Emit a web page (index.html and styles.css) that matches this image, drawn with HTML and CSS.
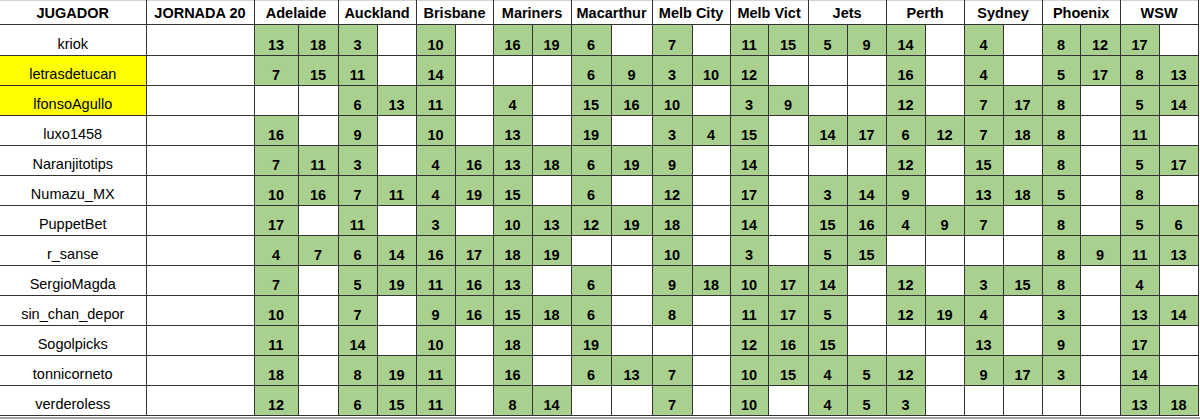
FILE: index.html
```html
<!DOCTYPE html>
<html>
<head>
<meta charset="utf-8">
<link rel="stylesheet" href="styles.css">
</head>
<body>
<table class="sheet">
<colgroup>
<col class="c146"><col class="c108">
<col class="c44"><col class="c40">
<col class="c39"><col class="c39">
<col class="c39"><col class="c38">
<col class="c39"><col class="c39">
<col class="c40"><col class="c41">
<col class="c40"><col class="c38">
<col class="c38"><col class="c40">
<col class="c39"><col class="c39">
<col class="c39"><col class="c39">
<col class="c39"><col class="c39">
<col class="c38"><col class="c40">
<col class="c39"><col class="c39">
</colgroup>
<thead>
<tr class="head">
<th class="first">JUGADOR</th><th>JORNADA 20</th>
<th colspan="2">Adelaide</th><th colspan="2">Auckland</th><th colspan="2">Brisbane</th><th colspan="2">Mariners</th><th colspan="2">Macarthur</th><th colspan="2">Melb City</th><th colspan="2">Melb Vict</th><th colspan="2">Jets</th><th colspan="2">Perth</th><th colspan="2">Sydney</th><th colspan="2">Phoenix</th><th colspan="2">WSW</th>
</tr>
</thead>
<tbody>
<tr class="r1"><td class="name">kriok</td><td></td>
<td class="g">13</td><td class="g">18</td><td class="g">3</td><td></td><td class="g">10</td><td></td><td class="g">16</td><td class="g">19</td><td class="g">6</td><td></td><td class="g">7</td><td></td><td class="g">11</td><td class="g">15</td><td class="g">5</td><td class="g">9</td><td class="g">14</td><td></td><td class="g">4</td><td></td><td class="g">8</td><td class="g">12</td><td class="g">17</td><td></td></tr>
<tr><td class="name hl">letrasdetucan</td><td></td>
<td class="g">7</td><td class="g">15</td><td class="g">11</td><td></td><td class="g">14</td><td></td><td></td><td></td><td class="g">6</td><td class="g">9</td><td class="g">3</td><td class="g">10</td><td class="g">12</td><td></td><td></td><td></td><td class="g">16</td><td></td><td class="g">4</td><td></td><td class="g">5</td><td class="g">17</td><td class="g">8</td><td class="g">13</td></tr>
<tr><td class="name hl">lfonsoAgullo</td><td></td>
<td></td><td></td><td class="g">6</td><td class="g">13</td><td class="g">11</td><td></td><td class="g">4</td><td></td><td class="g">15</td><td class="g">16</td><td class="g">10</td><td></td><td class="g">3</td><td class="g">9</td><td></td><td></td><td class="g">12</td><td></td><td class="g">7</td><td class="g">17</td><td class="g">8</td><td></td><td class="g">5</td><td class="g">14</td></tr>
<tr><td class="name">luxo1458</td><td></td>
<td class="g">16</td><td></td><td class="g">9</td><td></td><td class="g">10</td><td></td><td class="g">13</td><td></td><td class="g">19</td><td></td><td class="g">3</td><td class="g">4</td><td class="g">15</td><td></td><td class="g">14</td><td class="g">17</td><td class="g">6</td><td class="g">12</td><td class="g">7</td><td class="g">18</td><td class="g">8</td><td></td><td class="g">11</td><td></td></tr>
<tr><td class="name">Naranjitotips</td><td></td>
<td class="g">7</td><td class="g">11</td><td class="g">3</td><td></td><td class="g">4</td><td class="g">16</td><td class="g">13</td><td class="g">18</td><td class="g">6</td><td class="g">19</td><td class="g">9</td><td></td><td class="g">14</td><td></td><td></td><td></td><td class="g">12</td><td></td><td class="g">15</td><td></td><td class="g">8</td><td></td><td class="g">5</td><td class="g">17</td></tr>
<tr><td class="name">Numazu_MX</td><td></td>
<td class="g">10</td><td class="g">16</td><td class="g">7</td><td class="g">11</td><td class="g">4</td><td class="g">19</td><td class="g">15</td><td></td><td class="g">6</td><td></td><td class="g">12</td><td></td><td class="g">17</td><td></td><td class="g">3</td><td class="g">14</td><td class="g">9</td><td></td><td class="g">13</td><td class="g">18</td><td class="g">5</td><td></td><td class="g">8</td><td></td></tr>
<tr><td class="name">PuppetBet</td><td></td>
<td class="g">17</td><td></td><td class="g">11</td><td></td><td class="g">3</td><td></td><td class="g">10</td><td class="g">13</td><td class="g">12</td><td class="g">19</td><td class="g">18</td><td></td><td class="g">14</td><td></td><td class="g">15</td><td class="g">16</td><td class="g">4</td><td class="g">9</td><td class="g">7</td><td></td><td class="g">8</td><td></td><td class="g">5</td><td class="g">6</td></tr>
<tr><td class="name">r_sanse</td><td></td>
<td class="g">4</td><td class="g">7</td><td class="g">6</td><td class="g">14</td><td class="g">16</td><td class="g">17</td><td class="g">18</td><td class="g">19</td><td></td><td></td><td class="g">10</td><td></td><td class="g">3</td><td></td><td class="g">5</td><td class="g">15</td><td></td><td></td><td></td><td></td><td class="g">8</td><td class="g">9</td><td class="g">11</td><td class="g">13</td></tr>
<tr><td class="name">SergioMagda</td><td></td>
<td class="g">7</td><td></td><td class="g">5</td><td class="g">19</td><td class="g">11</td><td class="g">16</td><td class="g">13</td><td></td><td class="g">6</td><td></td><td class="g">9</td><td class="g">18</td><td class="g">10</td><td class="g">17</td><td class="g">14</td><td></td><td class="g">12</td><td></td><td class="g">3</td><td class="g">15</td><td class="g">8</td><td></td><td class="g">4</td><td></td></tr>
<tr><td class="name">sin_chan_depor</td><td></td>
<td class="g">10</td><td></td><td class="g">7</td><td></td><td class="g">9</td><td class="g">16</td><td class="g">15</td><td class="g">18</td><td class="g">6</td><td></td><td class="g">8</td><td></td><td class="g">11</td><td class="g">17</td><td class="g">5</td><td></td><td class="g">12</td><td class="g">19</td><td class="g">4</td><td></td><td class="g">3</td><td></td><td class="g">13</td><td class="g">14</td></tr>
<tr><td class="name">Sogolpicks</td><td></td>
<td class="g">11</td><td></td><td class="g">14</td><td></td><td class="g">10</td><td></td><td class="g">18</td><td></td><td class="g">19</td><td></td><td></td><td></td><td class="g">12</td><td class="g">16</td><td class="g">15</td><td></td><td></td><td></td><td class="g">13</td><td></td><td class="g">9</td><td></td><td class="g">17</td><td></td></tr>
<tr><td class="name">tonnicorneto</td><td></td>
<td class="g">18</td><td></td><td class="g">8</td><td class="g">19</td><td class="g">11</td><td></td><td class="g">16</td><td></td><td class="g">6</td><td class="g">13</td><td class="g">7</td><td></td><td class="g">10</td><td class="g">15</td><td class="g">4</td><td class="g">5</td><td class="g">12</td><td></td><td class="g">9</td><td class="g">17</td><td class="g">3</td><td></td><td class="g">14</td><td></td></tr>
<tr><td class="name">verderoless</td><td></td>
<td class="g">12</td><td></td><td class="g">6</td><td class="g">15</td><td class="g">11</td><td></td><td class="g">8</td><td class="g">14</td><td></td><td></td><td class="g">7</td><td></td><td class="g">10</td><td></td><td class="g">4</td><td class="g">5</td><td class="g">3</td><td></td><td></td><td></td><td></td><td></td><td class="g">13</td><td class="g">18</td></tr>
</tbody>
</table>
<div class="below"></div>
</body>
</html>
```

FILE: styles.css
```css
html, body {
  margin: 0;
  padding: 0;
  background: #ffffff;
}

body {
  font-family: "Liberation Sans", Arial, sans-serif;
  color: #000;
}

.sheet {
  border-collapse: collapse;
  table-layout: fixed;
  width: 1198px;
}

.c146 { width: 146px; }
.c108 { width: 108px; }
.c44 { width: 44px; }
.c41 { width: 41px; }
.c40 { width: 40px; }
.c39 { width: 39px; }
.c38 { width: 38px; }

.sheet th,
.sheet td {
  border: 1px solid #333333;
  padding: 0 0 2px 0;
  text-align: center;
  vertical-align: bottom;
  font-size: 14.5px;
  line-height: 16px;
  white-space: nowrap;
  overflow: hidden;
}

.sheet th {
  font-weight: bold;
  border-top: 1px solid #d4d4d4;
  padding-bottom: 3px;
}

.head { height: 24px; }
.sheet tbody tr { height: 30px; }
.sheet tbody tr.r1 { height: 31px; }

.sheet .first,
.sheet .name {
  border-left: none;
}

.sheet .name {
  font-size: 14.5px;
  font-weight: normal;
  padding-bottom: 3px;
}

.sheet .hl {
  background: #ffff00;
}

.sheet .g {
  background: #a9d08e;
  font-weight: bold;
}

.below {
  margin-top: 1px;
  height: 3px;
  border-top: 2px solid #a6a6a6;
}
```
